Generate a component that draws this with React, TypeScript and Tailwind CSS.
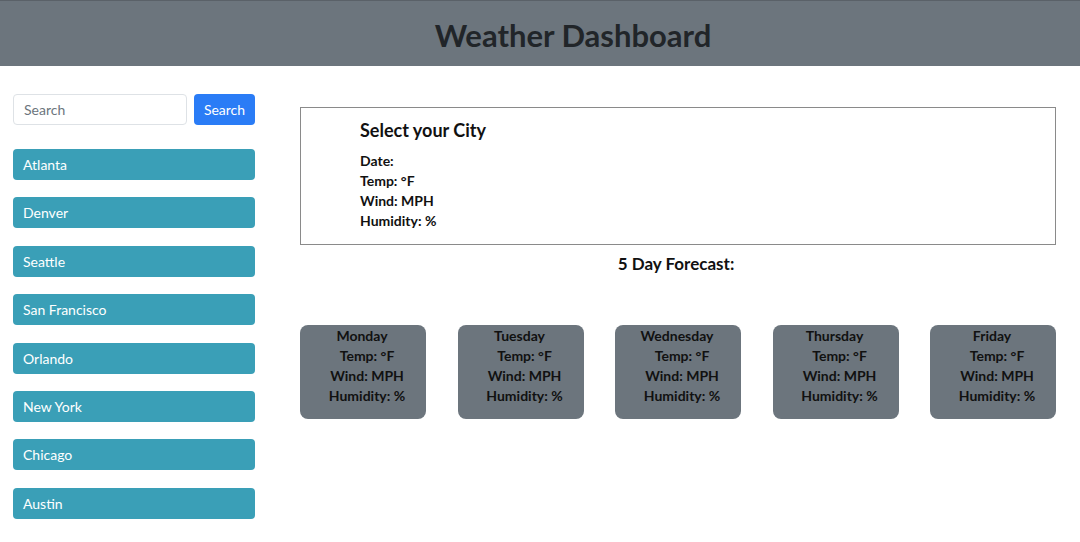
import React from "react";

const cities = ["Atlanta", "Denver", "Seattle", "San Francisco", "Orlando", "New York", "Chicago", "Austin"];
const days = ["Monday", "Tuesday", "Wednesday", "Thursday", "Friday"];

export default function App() {
  return (
    <div className="min-h-[542px] bg-white text-[#212529]" style={{ fontFamily: "Lato, 'Noto Sans', sans-serif" }}>
      <header className="h-[66px] bg-[#6c757d] border-t border-[#5a6168] flex items-center justify-center pl-[66px] pt-[3px]">
        <h1 className="text-[31px] font-bold leading-none text-[#212529]">Weather Dashboard</h1>
      </header>
      <div className="flex">
        <aside className="w-[268px] pl-[13px] pr-[13px] pt-[28px]">
          <div className="flex gap-[7px]">
            <input
              className="w-[174px] h-[31px] border border-[#dee2e6] rounded-[4px] px-[10px] text-[14px] placeholder-[#6c757d] outline-none"
              placeholder="Search"
            />
            <button className="w-[61px] h-[31px] bg-[#2a7cf6] text-white text-[14px] rounded-[4px]">Search</button>
          </div>
          <div className="mt-[24px] flex flex-col gap-[17.4px]">
            {cities.map((c) => (
              <button key={c} className="h-[31px] w-[242px] bg-[#3a9fb7] text-white text-[14px] text-left pl-[10px] rounded-[4px]">
                {c}
              </button>
            ))}
          </div>
        </aside>
        <main className="w-[756px] ml-[32px] pt-[41px]">
          <section className="border border-[#8a8a8a] h-[138px] pl-[59px] pt-[9px]">
            <h2 className="text-[18px] font-bold leading-[26px] text-[#111]">Select your City</h2>
            <div className="mt-[8px] text-[14px] font-bold leading-[20px] text-[#111]">
              <p>Date:</p>
              <p>Temp: °F</p>
              <p>Wind: MPH</p>
              <p>Humidity: %</p>
            </div>
          </section>
          <h3 className="mt-[7px] text-center text-[17px] font-bold leading-[24px] text-[#111] pr-[4px]">5 Day Forecast:</h3>
          <div className="mt-[49px] flex justify-between">
            {days.map((d) => (
              <div key={d} className="w-[126px] h-[94px] bg-[#6c757d] rounded-[8px] pt-[1px] text-center text-[14px] font-bold leading-[20px] text-[#111]">
                <p className="pr-[2px]">{d}</p>
                <p className="pl-[8px]">Temp: °F</p>
                <p className="pl-[8px]">Wind: MPH</p>
                <p className="pl-[8px]">Humidity: %</p>
              </div>
            ))}
          </div>
        </main>
      </div>
    </div>
  );
}
